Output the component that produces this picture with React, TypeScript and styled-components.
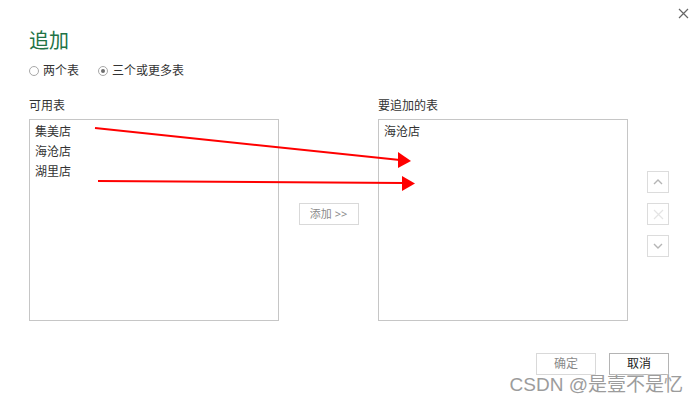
import React from 'react';
import styled, { createGlobalStyle } from 'styled-components';

const GlobalStyle = createGlobalStyle`
  html, body {
    margin: 0;
    padding: 0;
    background: #ffffff;
  }
  body {
    font-family: "Noto Sans", "Noto Sans CJK SC", sans-serif;
    color: #333333;
  }
`;

const Dialog = styled.div`
  position: relative;
  width: 699px;
  height: 404px;
  box-sizing: border-box;
  padding: 29px 30px 0 29px;
  background: #ffffff;
  overflow: hidden;
`;

const CloseButton = styled.button`
  position: absolute;
  top: 7px;
  right: 10px;
  width: 12px;
  height: 12px;
  padding: 0;
  border: none;
  background: transparent;
  display: flex;
  align-items: center;
  justify-content: center;
`;

const Title = styled.h1`
  margin: 0;
  font-size: 20px;
  line-height: 24px;
  font-weight: 400;
  color: #217346;
`;

const RadioRow = styled.div`
  display: flex;
  align-items: center;
  gap: 19px;
  margin-top: 10px;
  height: 16px;
`;

const RadioOption = styled.label`
  display: flex;
  align-items: center;
  gap: 4px;
  font-size: 12px;
  line-height: 16px;
  color: #333333;
`;

const RadioDot = styled.span<{ $checked?: boolean }>`
  position: relative;
  width: 10px;
  height: 10px;
  box-sizing: border-box;
  border: 1px solid #a8a8a8;
  border-radius: 50%;
  background: #ffffff;
  &::after {
    content: '';
    display: ${(p) => (p.$checked ? 'block' : 'none')};
    position: absolute;
    left: 2px;
    top: 2px;
    width: 4px;
    height: 4px;
    border-radius: 50%;
    background: #6e6e6e;
  }
`;

const Columns = styled.div`
  display: flex;
  margin-top: 19px;
`;

const ListColumn = styled.div`
  width: 250px;
  display: flex;
  flex-direction: column;
`;

const ColumnLabel = styled.div`
  font-size: 12px;
  line-height: 16px;
  height: 16px;
  margin-bottom: 5px;
  color: #333333;
`;

const ListBox = styled.ul`
  margin: 0;
  padding: 2px 0 0 5px;
  list-style: none;
  height: 202px;
  box-sizing: border-box;
  border: 1px solid #c6c6c6;
`;

const ListItem = styled.li`
  font-size: 12px;
  line-height: 20px;
  color: #333333;
`;

const MiddleColumn = styled.div`
  width: 99px;
  padding-top: 105px;
  display: flex;
  justify-content: center;
`;

const GhostButton = styled.button<{ $strong?: boolean }>`
  height: 22px;
  box-sizing: border-box;
  padding: 0;
  background: #ffffff;
  border: 1px solid ${(p) => (p.$strong ? '#b4b4b4' : '#d9d9d9')};
  color: ${(p) => (p.$strong ? '#222222' : '#8a8a8a')};
  font-family: "Noto Sans", "Noto Sans CJK SC", sans-serif;
  font-size: 11px;
  line-height: 20px;
`;

const AddButton = styled(GhostButton)`
  width: 60px;
`;

const SideColumn = styled.div`
  margin-left: 19px;
  padding-top: 73px;
  display: flex;
  flex-direction: column;
  gap: 10px;
`;

const IconButton = styled.button`
  width: 22px;
  height: 22px;
  box-sizing: border-box;
  padding: 0;
  border: 1px solid #dcdcdc;
  background: #ffffff;
  display: flex;
  align-items: center;
  justify-content: center;
`;

const Footer = styled.div`
  display: flex;
  justify-content: flex-end;
  gap: 13px;
  margin-top: 32px;
`;

const FooterButton = styled(GhostButton)`
  width: 60px;
  font-size: 12px;
`;

const Overlay = styled.svg`
  position: absolute;
  left: 0;
  top: 0;
  pointer-events: none;
`;

const Watermark = styled.div`
  position: absolute;
  right: 16px;
  bottom: 8px;
  font-family: "Liberation Sans", "Noto Sans CJK SC", sans-serif;
  font-size: 19px;
  line-height: 22px;
  color: #9c9c9c;
  text-shadow: 0 0 2px #ffffff, 0 0 1px #ffffff;
`;

const available = ['集美店', '海沧店', '湖里店'];
const selected = ['海沧店'];

function App() {
  return (
    <>
      <GlobalStyle />
      <Dialog>
        <CloseButton aria-label="关闭">
          <svg width="11" height="11" viewBox="0 0 11 11">
            <path d="M1 1 L10 10 M10 1 L1 10" stroke="#666" strokeWidth="1.2" />
          </svg>
        </CloseButton>
        <Title>追加</Title>
        <RadioRow>
          <RadioOption>
            <RadioDot />
            两个表
          </RadioOption>
          <RadioOption>
            <RadioDot $checked />
            三个或更多表
          </RadioOption>
        </RadioRow>
        <Columns>
          <ListColumn>
            <ColumnLabel>可用表</ColumnLabel>
            <ListBox>
              {available.map((name) => (
                <ListItem key={name}>{name}</ListItem>
              ))}
            </ListBox>
          </ListColumn>
          <MiddleColumn>
            <AddButton>添加 &gt;&gt;</AddButton>
          </MiddleColumn>
          <ListColumn>
            <ColumnLabel>要追加的表</ColumnLabel>
            <ListBox>
              {selected.map((name) => (
                <ListItem key={name}>{name}</ListItem>
              ))}
            </ListBox>
          </ListColumn>
          <SideColumn>
            <IconButton aria-label="上移">
              <svg width="10" height="6" viewBox="0 0 10 6">
                <path d="M1 5 L5 1 L9 5" stroke="#b5b5b5" strokeWidth="1.4" fill="none" />
              </svg>
            </IconButton>
            <IconButton aria-label="删除">
              <svg width="11" height="11" viewBox="0 0 11 11">
                <path d="M1 1 L10 10 M10 1 L1 10" stroke="#e4e4e4" strokeWidth="1.2" />
              </svg>
            </IconButton>
            <IconButton aria-label="下移">
              <svg width="10" height="6" viewBox="0 0 10 6">
                <path d="M1 1 L5 5 L9 1" stroke="#b5b5b5" strokeWidth="1.4" fill="none" />
              </svg>
            </IconButton>
          </SideColumn>
        </Columns>
        <Footer>
          <FooterButton>确定</FooterButton>
          <FooterButton $strong>取消</FooterButton>
        </Footer>
        <Overlay width="699" height="404" viewBox="0 0 699 404">
          <line x1="95" y1="128" x2="400" y2="160" stroke="#ff0000" strokeWidth="2" />
          <polygon points="398,152 411,161 398,168" fill="#ff0000" />
          <line x1="98" y1="181" x2="404" y2="183" stroke="#ff0000" strokeWidth="2" />
          <polygon points="402,176 415,183.5 402,191" fill="#ff0000" />
        </Overlay>
        <Watermark>CSDN @是壹不是忆</Watermark>
      </Dialog>
    </>
  );
}

export default App;
